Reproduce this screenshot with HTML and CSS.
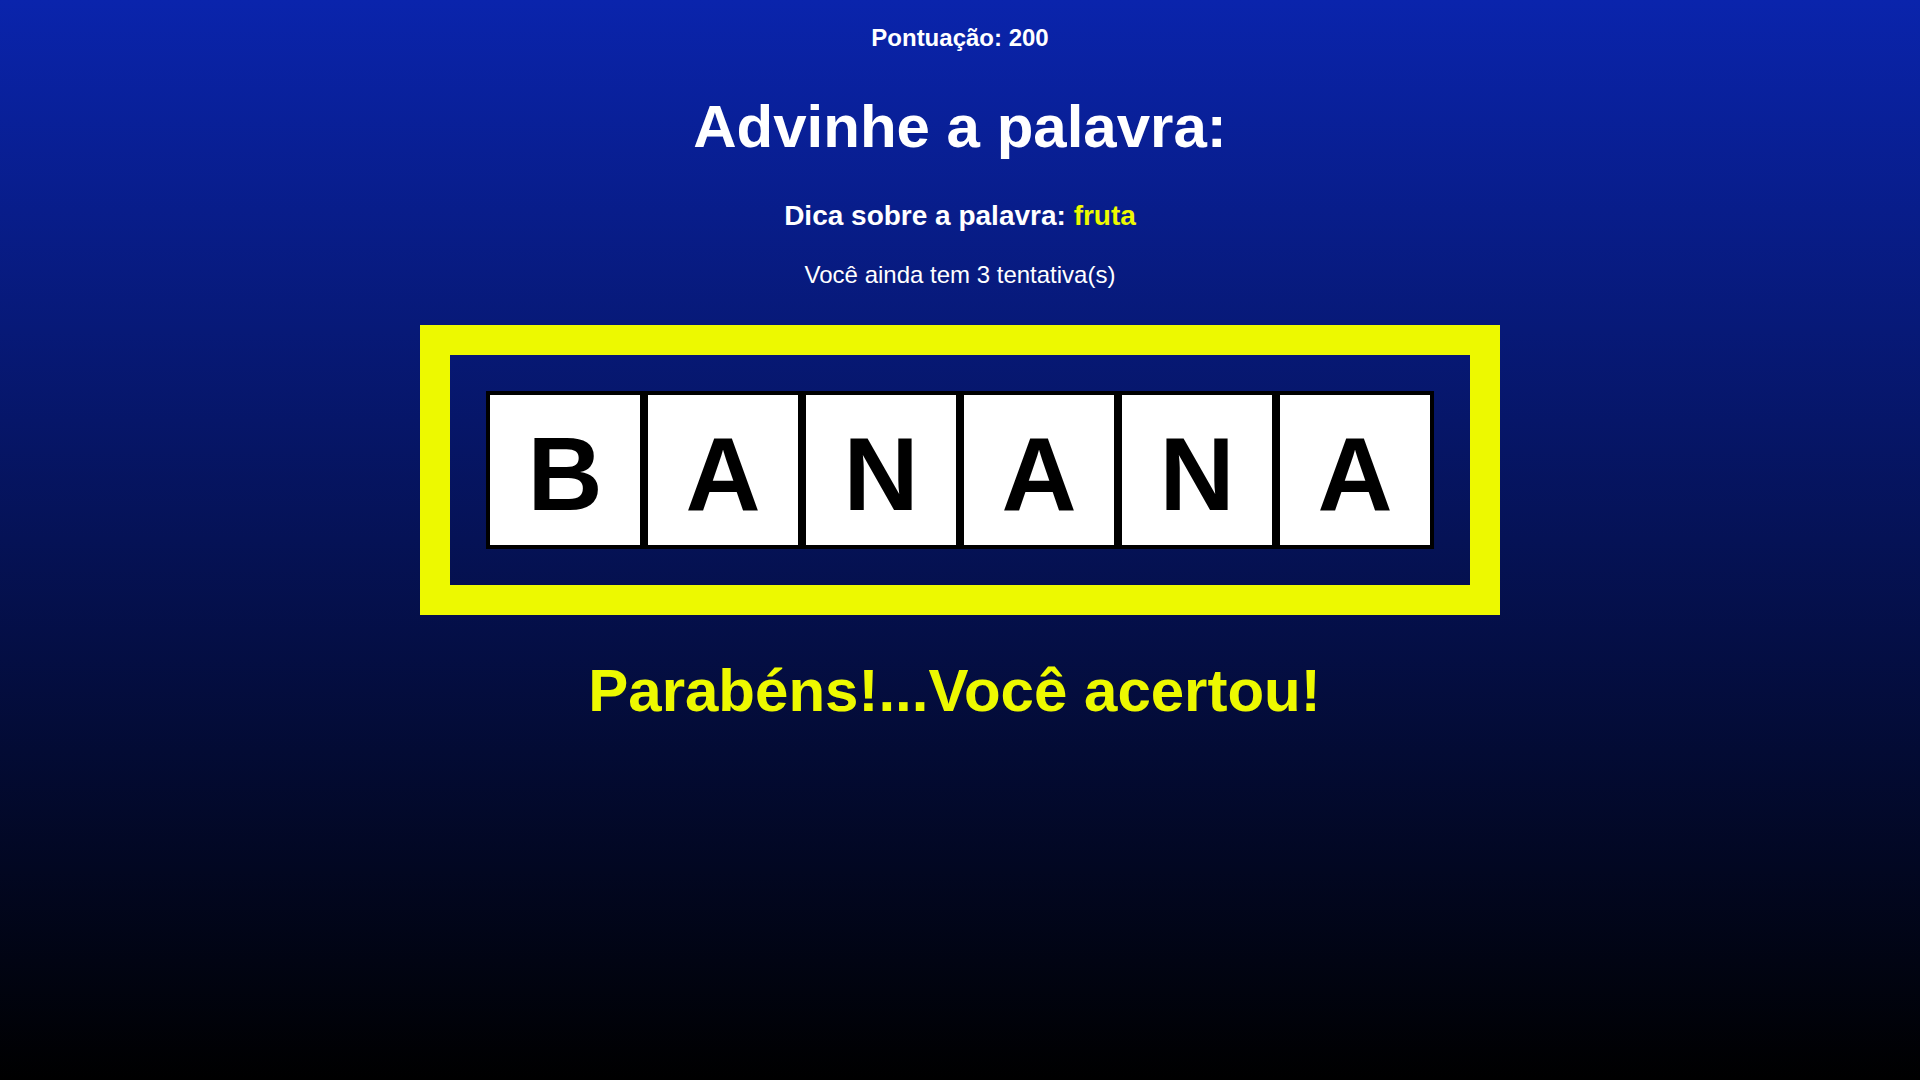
FILE: index.html
```html
<!DOCTYPE html>
<html lang="pt-BR">
<head>
<meta charset="utf-8">
<title>Advinhe a palavra</title>
<link rel="stylesheet" href="styles.css">
</head>
<body>
<main class="game">
  <p class="score">Pontuação: 200</p>
  <h1 class="title">Advinhe a palavra:</h1>
  <p class="hint">Dica sobre a palavra: <span class="hint-word">fruta</span></p>
  <p class="tries">Você ainda tem 3 tentativa(s)</p>
  <section class="board">
    <div class="tiles">
      <div class="tile">B</div>
      <div class="tile">A</div>
      <div class="tile">N</div>
      <div class="tile">A</div>
      <div class="tile">N</div>
      <div class="tile">A</div>
    </div>
  </section>
  <h2 class="result">Parabéns!...Você acertou!</h2>
</main>
</body>
</html>
```
FILE: styles.css
```css
html, body {
  margin: 0;
  padding: 0;
}

body {
  min-height: 100vh;
  background: linear-gradient(to bottom, #0a24ac 0%, #000000 100%);
  font-family: "Liberation Sans", Arial, sans-serif;
  color: #ffffff;
}

.game {
  display: flex;
  flex-direction: column;
  align-items: center;
  text-align: center;
  padding-top: 24px;
}

.score {
  margin: 0;
  font-size: 24px;
  line-height: 28px;
  font-weight: bold;
}

.title {
  margin: 40px 0 0;
  font-size: 60px;
  line-height: 69px;
  font-weight: bold;
}

.hint {
  margin: 39px 0 0;
  font-size: 28px;
  line-height: 32px;
  font-weight: bold;
}

.hint-word {
  color: #edf900;
}

.tries {
  margin: 29px 0 0;
  font-size: 24px;
  line-height: 28px;
}

.board {
  margin-top: 36px;
  border: 30px solid #edf900;
  padding: 36px;
}

.tiles {
  display: flex;
}

.tile {
  width: 150px;
  height: 142px;
  padding-top: 8px;
  border: 4px solid #000000;
  background: #ffffff;
  color: #000000;
  font-size: 104px;
  font-weight: bold;
  display: flex;
  align-items: center;
  justify-content: center;
  line-height: 1;
}

.result {
  margin: 41px 0 0;
  padding-right: 11px;
  font-size: 60px;
  line-height: 69px;
  font-weight: bold;
  color: #edf900;
}
```
